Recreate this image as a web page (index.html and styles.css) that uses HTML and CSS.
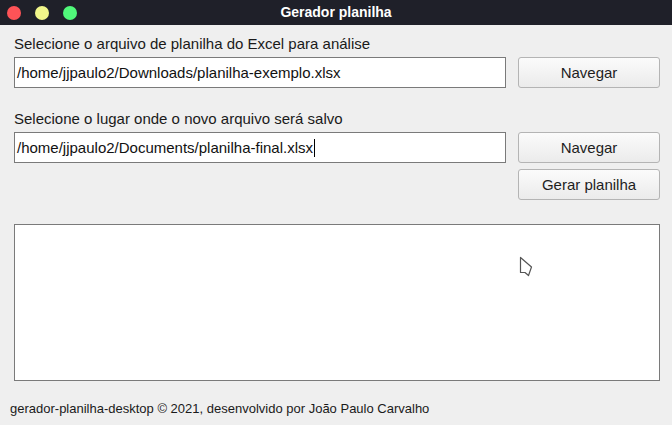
FILE: index.html
```html
<!DOCTYPE html>
<html lang="pt">
<head>
<meta charset="utf-8">
<title>Gerador planilha</title>
<link rel="stylesheet" href="styles.css">
</head>
<body>
<div class="app">
  <header class="titlebar">
    <div class="dots">
      <span class="dot red"></span>
      <span class="dot yellow"></span>
      <span class="dot green"></span>
    </div>
    <div class="title">Gerador planilha</div>
  </header>
  <main class="content">
    <section class="group">
      <div class="label">Selecione o arquivo de planilha do Excel para análise</div>
      <div class="row">
        <div class="input">/home/jjpaulo2/Downloads/planilha-exemplo.xlsx</div>
        <div class="actions">
          <button class="btn">Navegar</button>
        </div>
      </div>
    </section>
    <section class="group second">
      <div class="label">Selecione o lugar onde o novo arquivo será salvo</div>
      <div class="row">
        <div class="input">/home/jjpaulo2/Documents/planilha-final.xlsx<span class="caret"></span></div>
        <div class="actions">
          <button class="btn">Navegar</button>
          <button class="btn">Gerar planilha</button>
        </div>
      </div>
    </section>
    <div class="log">
      <svg class="pointer" width="14" height="22" viewBox="0 0 14 22"><path d="M1.5 1.5 L1.5 16.5 L6 16.5 L9.5 19.5 L12.5 11 Z" fill="#fff" stroke="#555" stroke-width="1.2" stroke-linejoin="round"/></svg>
    </div>
  </main>
  <footer class="footer">gerador-planilha-desktop © 2021, desenvolvido por João Paulo Carvalho</footer>
</div>
</body>
</html>
```
FILE: styles.css
```css
* { box-sizing: border-box; }
html, body { margin: 0; padding: 0; }
body {
  background: #efefef;
  font-family: "Liberation Sans", Arial, sans-serif;
  color: #1a1a1a;
  width: 672px;
  height: 425px;
  overflow: hidden;
}
.app { display: flex; flex-direction: column; height: 425px; }
.titlebar {
  height: 25px;
  background: #1f2029;
  display: flex;
  align-items: center;
  position: relative;
}
.dots { display: flex; gap: 14px; padding-left: 7px; }
.dot { width: 14px; height: 14px; border-radius: 50%; display: block; }
.red { background: #fe5357; }
.yellow { background: #f1f68a; }
.green { background: #50f87a; }
.title {
  position: absolute;
  left: 0; right: 0; top: 0;
  line-height: 25px;
  text-align: center;
  color: #fff;
  font-weight: bold;
  font-size: 14px;
  padding-left: 0;
}
.content { padding: 10px 12px 0 14px; }
.label { font-size: 15px; line-height: 17px; margin-bottom: 5px; color: #1a1a1a; }
.group.second { margin-top: 22px; }
.row { display: grid; grid-template-columns: 1fr 142px; column-gap: 12px; align-items: start; }
.input {
  height: 31px;
  background: #fff;
  border: 1px solid #7a7a7a;
  font-size: 15px;
  line-height: 29px;
  padding-left: 2px;
  color: #111;
  white-space: nowrap;
  display: flex;
  align-items: center;
}
.caret { display: inline-block; width: 1px; height: 18px; background: #000; margin-left: 1px; }
.actions { display: flex; flex-direction: column; gap: 6px; }
.btn {
  height: 31px;
  width: 142px;
  border: 1px solid #b4b4b4;
  border-radius: 3px;
  background: linear-gradient(#fbfbfb, #ebebeb);
  font-family: "Liberation Sans", Arial, sans-serif;
  font-size: 15px;
  color: #1e1e1e;
  padding: 0;
}
.log {
  margin-top: 24px;
  height: 157px;
  background: #fff;
  border: 1px solid #7a7a7a;
  position: relative;
}
.pointer { position: absolute; left: 504px; top: 31px; }
.footer {
  margin-top: 20px;
  padding-left: 10px;
  font-size: 13px;
  line-height: 15px;
  color: #1a1a1a;
}
```
